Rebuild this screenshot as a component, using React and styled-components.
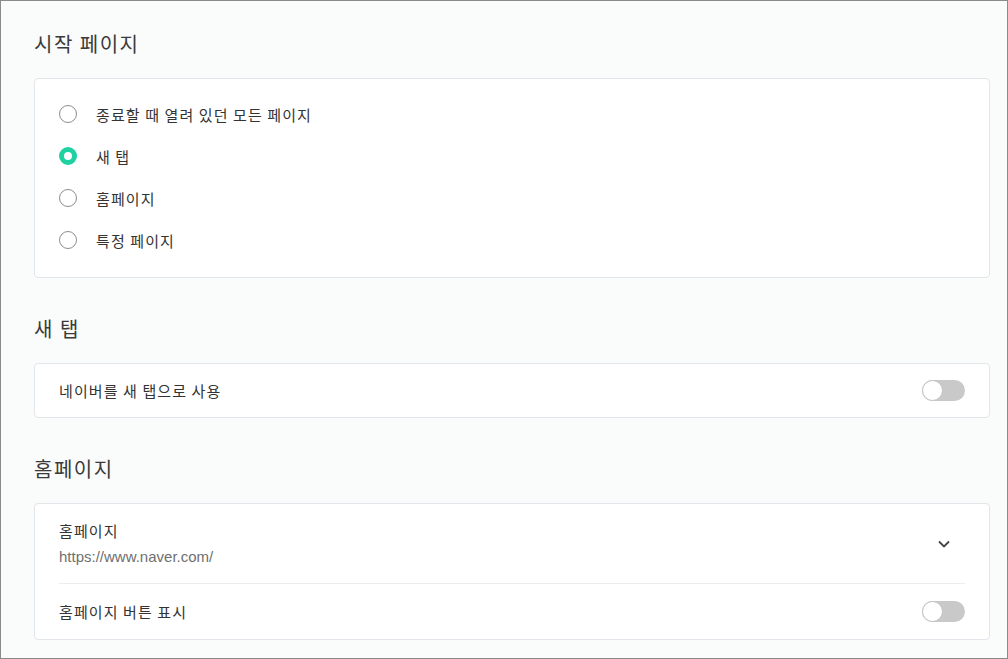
import React, { useState } from "react";
import styled, { createGlobalStyle } from "styled-components";

const Global = createGlobalStyle`
  html, body { margin: 0; padding: 0; }
  body {
    font-family: "Noto Sans CJK KR", "Noto Sans", sans-serif;
    background: #fafbfb;
  }
  * { box-sizing: border-box; }
`;

const Frame = styled.div`
  width: 1008px;
  height: 659px;
  border: 1px solid #8a8a8a;
  background: #fafbfb;
  padding: 30px 17px 0 33px;
  overflow: hidden;
`;

const Section = styled.section`
  display: flex;
  flex-direction: column;
  & + & { margin-top: 38px; }
`;

const Heading = styled.h2`
  margin: 0 0 21px;
  height: 26px;
  line-height: 26px;
  font-size: 20px;
  font-weight: 400;
  color: #3a3a3a;
  letter-spacing: 1.5px;
`;

const Card = styled.div`
  background: #fff;
  border: 1px solid #e2e5e9;
  border-radius: 4px;
  padding: ${(p) => p.$pad || "0"};
`;

const RadioRow = styled.label`
  display: flex;
  align-items: center;
  height: 42px;
  padding-left: 24px;
  gap: 19px;
  font-size: 15px;
  letter-spacing: 1.1px;
  color: #333;
  cursor: pointer;
`;

const RadioDot = styled.span`
  width: 18px;
  height: 18px;
  border-radius: 50%;
  flex: none;
  border: ${(p) => (p.$on ? "5px solid #1dd1a1" : "1px solid #8d8d8d")};
  background: #fff;
`;

const Row = styled.div`
  display: flex;
  align-items: center;
  justify-content: space-between;
  min-height: ${(p) => p.$h || 53}px;
  padding: 0 24px;
  font-size: 15px;
  color: #333;
`;

const Divider = styled.div`
  height: 1px;
  margin: 0 24px;
  background: #ebedef;
`;

const TextCol = styled.div`
  display: flex;
  flex-direction: column;
`;

const Label = styled.span`
  line-height: 22px;
  letter-spacing: 1.1px;
`;

const Url = styled.span`
  font-family: "Liberation Sans", Arial, sans-serif;
  font-size: 15px;
  line-height: 22px;
  color: #6f6f6f;
  margin-top: 4px;
`;

const Track = styled.button`
  position: relative;
  width: 43px;
  height: 21px;
  padding: 0;
  border: none;
  border-radius: 11px;
  background: ${(p) => (p.$on ? "#1dd1a1" : "#c9c9c9")};
  cursor: pointer;
  flex: none;
`;

const Knob = styled.span`
  position: absolute;
  top: 0;
  left: ${(p) => (p.$on ? "22px" : "0")};
  width: 21px;
  height: 21px;
  border-radius: 50%;
  background: #fff;
  border: 1px solid #c2c2c2;
`;

const ChevronBox = styled.div`
  width: 43px;
  display: flex;
  justify-content: center;
  align-items: center;
`;

function Toggle({ on, onClick }) {
  return (
    <Track $on={on} onClick={onClick} aria-pressed={on}>
      <Knob $on={on} />
    </Track>
  );
}

const options = [
  "종료할 때 열려 있던 모든 페이지",
  "새 탭",
  "홈페이지",
  "특정 페이지",
];

export default function App() {
  const [sel, setSel] = useState(1);
  const [naver, setNaver] = useState(false);
  const [homeBtn, setHomeBtn] = useState(false);
  return (
    <>
      <Global />
      <Frame>
        <Section>
          <Heading>시작 페이지</Heading>
          <Card $pad="14px 0 16px">
            {options.map((o, i) => (
              <RadioRow key={o} onClick={() => setSel(i)}>
                <RadioDot $on={sel === i} />
                {o}
              </RadioRow>
            ))}
          </Card>
        </Section>
        <Section>
          <Heading>새 탭</Heading>
          <Card>
            <Row $h={53}>
              <Label>네이버를 새 탭으로 사용</Label>
              <Toggle on={naver} onClick={() => setNaver(!naver)} />
            </Row>
          </Card>
        </Section>
        <Section>
          <Heading>홈페이지</Heading>
          <Card>
            <Row $h={79}>
              <TextCol>
                <Label>홈페이지</Label>
                <Url>https://www.naver.com/</Url>
              </TextCol>
              <ChevronBox>
                <svg width="12" height="8" viewBox="0 0 12 8" fill="none">
                  <path d="M1 1.5l5 5 5-5" stroke="#444" strokeWidth="1.8" />
                </svg>
              </ChevronBox>
            </Row>
            <Divider />
            <Row $h={55}>
              <Label>홈페이지 버튼 표시</Label>
              <Toggle on={homeBtn} onClick={() => setHomeBtn(!homeBtn)} />
            </Row>
          </Card>
        </Section>
      </Frame>
    </>
  );
}
